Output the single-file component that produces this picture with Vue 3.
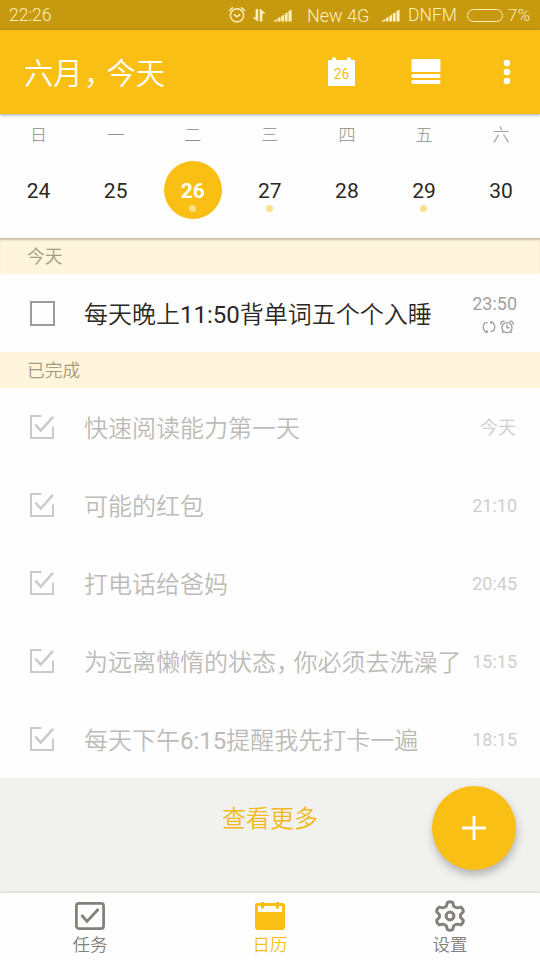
<script setup>
const days = [
  { week: '日', date: 24 },
  { week: '一', date: 25 },
  { week: '二', date: 26, active: true, dot: true },
  { week: '三', date: 27, dot: true },
  { week: '四', date: 28 },
  { week: '五', date: 29, dot: true },
  { week: '六', date: 30 },
]

const completed = [
  { title: '快速阅读能力第一天', time: '今天', word: true },
  { title: '可能的红包', time: '21:10' },
  { title: '打电话给爸妈', time: '20:45' },
  { title: '为远离懒惰的状态，你必须去洗澡了', time: '15:15' },
  { title: '每天下午6:15提醒我先打卡一遍', time: '18:15' },
]

// Splits a title so that clock times and commas can be styled on their own.
const split = (title) =>
  title
    .split(/([\d:]+|，)/)
    .filter(Boolean)
    .map((text) => ({
      text,
      kind: text === '，' ? 'comma' : /^\d/.test(text) ? 'digits' : '',
    }))
</script>

<template>
  <div class="screen">
    <div class="status">
      <span class="clock">22:26</span>
      <svg class="s-alarm" width="18" height="18" viewBox="0 0 18 18" fill="none" stroke="currentColor" stroke-width="1.4" stroke-linecap="round">
        <circle cx="9" cy="9.4" r="6.6" />
        <path d="M6.4 8.600 9 10.800l2.800-2.200M1.300 4.600 4.600 1.700M16.700 4.600l-3.300-2.900" />
      </svg>
      <svg class="s-data" width="14" height="14" viewBox="0 0 14 14" fill="currentColor">
        <path d="M3.600 1h2.600v12.500L.3 9.500h3.300zM7.800 13.500h2.600V5.500h3.300L7.800.5z" />
      </svg>
      <svg class="s-sig" width="20" height="13" viewBox="0 0 20 13" fill="currentColor">
        <path d="M0 12.500 4 10v2.500zM4.700 9.300 7.500 7.800v4.700H4.700zM8.300 7.300 11 5.500v7H8.300zM11.800 4.800l2.800-1.600v9.300h-2.800zM15.500 2.300 18.600.5v12h-3.100z" />
      </svg>
      <span class="net">New 4G</span>
      <svg class="s-sig2" width="20" height="13" viewBox="0 0 20 13" fill="currentColor">
        <path d="M0 12.500 4 10v2.500zM4.700 9.300 7.500 7.800v4.700H4.700zM8.300 7.300 11 5.500v7H8.300zM11.800 4.800l2.800-1.600v9.300h-2.800zM15.500 2.300 18.600.5v12h-3.100z" />
      </svg>
      <span class="carrier">DNFM</span>
      <span class="battery"></span>
      <span class="percent">7%</span>
    </div>

    <header class="header">
      <h1>六月<span class="comma">，</span>今天</h1>
      <div class="cal-icon"><span>26</span></div>
      <svg class="view-icon" width="30" height="26" viewBox="0 0 30 26" fill="#fff">
        <rect x=".5" y="0" width="29" height="13" rx="1.500" />
        <rect x=".5" y="15" width="29" height="4" rx="1.500" />
        <rect x=".5" y="21" width="29" height="4" rx="1.500" />
      </svg>
      <svg class="more-icon" width="8" height="26" viewBox="0 0 8 26" fill="#fff">
        <circle cx="4" cy="4" r="3.300" />
        <circle cx="4" cy="13" r="3.300" />
        <circle cx="4" cy="22" r="3.300" />
      </svg>
    </header>

    <section class="week">
      <div v-for="d in days" :key="d.date" class="day">
        <span class="week-name">{{ d.week }}</span>
        <span class="date" :class="{ active: d.active }">
          {{ d.date }}
          <i v-if="d.dot" class="dot"></i>
        </span>
      </div>
    </section>

    <div class="band first">今天</div>
    <div class="row pending">
      <span class="box"></span>
      <span class="title"><span v-for="(p, i) in split('每天晚上11:50背单词五个个入睡')" :key="i" :class="p.kind">{{ p.text }}</span></span>
      <div class="meta">
        <span class="time">23:50</span>
        <div class="meta-icons">
          <svg width="14" height="14" viewBox="0 0 14 14" fill="none" stroke="currentColor" stroke-width="1.300">
            <path d="M5.600 12.600A5.700 5.700 0 0 1 3.400 2.600M8.400 1.400A5.700 5.700 0 0 1 10.600 11.400M3.400 2.600h2.200M8.400 1.400 9.600 3.900M5.600 12.600 4.400 10.100M10.600 11.400H8.400" />
          </svg>
          <svg width="14" height="14" viewBox="0 0 14 14" fill="none" stroke="currentColor" stroke-width="1.400">
            <circle cx="7" cy="7.600" r="5" />
            <path d="M7 4.500v3.300h2.600M.9 4.700C.2 2.500 2.400.6 4.500 1.500M13.100 4.700c.7-2.200-1.500-4.100-3.600-3.200M3.400 11.400l-1.200 1.700M10.600 11.400l1.200 1.700" />
          </svg>
        </div>
      </div>
    </div>

    <div class="band">已完成</div>
    <div v-for="t in completed" :key="t.time" class="row done">
      <svg class="check" width="26" height="26" viewBox="0 0 26 26" fill="none" stroke="currentColor">
        <path stroke-width="2" d="M12.500 2H2v22h22V12.500" />
        <path stroke-width="2.600" d="m6.300 10.500 5.400 6L24 2.800" />
      </svg>
      <span class="title"><span v-for="(p, i) in split(t.title)" :key="i" :class="p.kind">{{ p.text }}</span></span>
      <span class="time" :class="{ word: t.word }">{{ t.time }}</span>
    </div>

    <div class="footer">
      <span class="more">查看更多</span>
      <button class="fab" aria-label="+">
        <svg width="26" height="26" viewBox="0 0 26 26" stroke="#fff" stroke-width="2.800"><path d="M13 1v24M1 13h24" /></svg>
      </button>
    </div>

    <nav class="tabs">
      <div class="tab">
        <svg width="32" height="32" viewBox="0 0 32 32" fill="none" stroke="currentColor" stroke-width="2.800">
          <rect x="2.400" y="3.400" width="27.200" height="25.200" rx="2.500" />
          <path d="m7.500 15 5.500 6.500L24.500 9" />
        </svg>
        <span>任务</span>
      </div>
      <div class="tab on">
        <svg width="32" height="32" viewBox="0 0 32 32">
          <path fill="currentColor" fill-rule="evenodd" d="M3 3h4V2h3v1h12V2h3v1h4a2 2 0 0 1 2 2v22a3 3 0 0 1-3 3H4a3 3 0 0 1-3-3V5a2 2 0 0 1 2-2zM4 6v6h24V6h-3v2.500h-3V6H10v2.500H7V6z" />
        </svg>
        <span>日历</span>
      </div>
      <div class="tab">
        <svg width="32" height="32" viewBox="0 0 32 32" fill="none" stroke="currentColor" stroke-width="3" stroke-linejoin="round">
          <path d="M13.300 2.500Q16 .8 18.700 2.500L19.600 6.100Q21.200 7.500 23.100 7.900L26.700 7.100Q29.400 8.800 29.300 11.800L26.700 14.500Q26.200 16 26.700 17.500L29.300 20.200Q29.400 23.200 26.700 24.900L23.100 24.100Q21.200 24.500 19.600 25.900L18.700 29.500Q16 31.200 13.300 29.500L12.400 25.900Q10.800 24.500 8.900 24.100L5.300 24.900Q2.600 23.200 2.700 20.200L5.300 17.500Q5.800 16 5.300 14.500L2.700 11.800Q2.600 8.800 5.300 7.100L8.900 7.900Q10.800 7.500 12.400 6.100Z" />
          <circle cx="16" cy="16" r="3.900" />
        </svg>
        <span>设置</span>
      </div>
    </nav>
  </div>
</template>

<style>
body {
  margin: 0;
}
</style>

<style scoped>
.screen {
  width: 540px;
  height: 960px;
  overflow: hidden;
  display: flex;
  flex-direction: column;
  background: #fefefe;
  font-family: Roboto, "Noto Sans CJK SC", sans-serif;
  font-weight: 350;
  color: #2c2824;
}
.status {
  height: 30px;
  flex: none;
  box-sizing: border-box;
  display: flex;
  align-items: center;
  padding-left: 9px;
  background: #c6990f;
  color: #fff0bd;
  font-size: 17.500px;
  white-space: nowrap;
}
.clock { width: 219px; flex: none; }
.s-alarm { flex: none; }
.s-data { flex: none; margin-left: 6px; }
.s-sig { flex: none; margin-left: 7px; }
.net { margin-left: 14px; width: 66px; flex: none; font-size: 18px; }
.s-sig2 { flex: none; margin-left: 8px; }
.carrier { margin-left: 7px; width: 51px; flex: none; }
.battery {
  flex: none;
  box-sizing: border-box;
  width: 36px;
  height: 13px;
  margin-left: 8px;
  border: 1px solid currentColor;
  border-radius: 7px;
}
.percent { margin-left: 5px; font-size: 17px; }

.header {
  position: relative;
  z-index: 1;
  height: 84px;
  flex: none;
  display: flex;
  align-items: center;
  padding-left: 24px;
  background: #f9bf15;
  box-shadow: 0 1px 3px rgba(60, 70, 80, 0.5);
}
h1 {
  width: 304px;
  flex: none;
  margin: 4px 0 0;
  font-size: 29.300px;
  font-weight: 350;
  color: #fff;
  line-height: 40px;
}
h1 .comma { margin-left: 1.500px; letter-spacing: -7px; }
.title .comma { letter-spacing: -6.500px; }
.title .digits { font-weight: 400; }
.cal-icon {
  position: relative;
  width: 27px;
  height: 26px;
  margin-top: 1px;
  flex: none;
  display: flex;
  align-items: center;
  justify-content: center;
  background: #fff;
  border-radius: 1px;
  color: #f9bf15;
  font-size: 14px;
  font-weight: 400;
}
.cal-icon span { padding-top: 2px; }
.cal-icon::before,
.cal-icon::after {
  content: "";
  position: absolute;
  top: -3px;
  width: 4px;
  height: 5px;
  border-radius: 2px 2px 0 0;
  background: #fff;
}
.cal-icon::before { left: 4px; }
.cal-icon::after { right: 4px; }
.view-icon { margin-left: 56px; flex: none; }
.more-icon { margin-left: 62px; flex: none; }

.week {
  height: 124px;
  flex: none;
  display: grid;
  grid-template-columns: repeat(7, 77.100px);
  box-sizing: border-box;
}
.day {
  display: flex;
  flex-direction: column;
  align-items: center;
}
.week-name {
  margin-top: 9px;
  height: 24px;
  line-height: 24px;
  font-size: 17px;
  font-weight: 300;
  color: #8f8c89;
}
.date {
  position: relative;
  width: 58px;
  height: 58px;
  margin-top: 14px;
  line-height: 60px;
  border-radius: 50%;
  text-align: center;
  font-size: 21px;
  font-weight: 400;
}
.date.active {
  background: #f9bf15;
  color: #fff;
  font-weight: 700;
}
.dot {
  position: absolute;
  left: 25px;
  top: 44px;
  width: 7px;
  height: 7px;
  border-radius: 50%;
  background: #fbe08b;
}
.band {
  height: 36px;
  flex: none;
  box-sizing: border-box;
  padding-left: 27px;
  background: #fff4dc;
  color: #a69b80;
  font-size: 17.800px;
  line-height: 38px;
}
.band.first { box-shadow: inset 0 3px 2px -1px rgba(80, 60, 60, 0.3); }

.row {
  height: 78px;
  flex: none;
  box-sizing: border-box;
  display: flex;
  align-items: center;
  padding: 0 23px 0 29px;
  white-space: nowrap;
}
.box {
  width: 25px;
  height: 25px;
  margin-left: 1px;
  flex: none;
  box-sizing: border-box;
  border: 2px solid #9c9b9a;
}
.row .title {
  flex: 1;
  font-size: 24px;
  line-height: 36px;
}
.pending .title { margin: 4px 0 0 29px; }
.done .title {
  margin: 4px 0 0 29px;
  color: #bdbbb8;
}
.check { flex: none; color: #cbcbcb; }
.done .time {
  flex: none;
  margin-top: 2px;
  font-size: 18px;
  font-weight: 400;
  line-height: 24px;
  color: #d0cecc;
}
.done .time.word {
  margin-right: 1px;
  font-weight: 350;
}
.meta {
  display: flex;
  flex-direction: column;
  align-items: flex-end;
  color: #a3a19f;
}
.meta .time {
  font-size: 18px;
  font-weight: 400;
  line-height: 22px;
}
.meta-icons {
  display: flex;
  gap: 4px;
  margin: 5px 3px 0 0;
}
.meta-icons svg { display: block; }

.footer {
  position: relative;
  height: 115px;
  flex: none;
  display: flex;
  justify-content: center;
  background: #f1f1ef;
}
.more {
  margin-top: 23px;
  font-size: 24px;
  line-height: 36px;
  height: 36px;
  color: #f3b91d;
}
.fab {
  position: absolute;
  right: 24px;
  top: 8px;
  width: 84px;
  height: 84px;
  padding: 0;
  border: 0;
  border-radius: 50%;
  display: flex;
  align-items: center;
  justify-content: center;
  background: #f9bf15;
  box-shadow: 1px 5px 9px rgba(0, 0, 0, 0.26);
}
.tabs {
  position: relative;
  height: 67px;
  flex: none;
  display: grid;
  grid-template-columns: repeat(3, 1fr);
  background: #fefefe;
  box-shadow: 0 -1px 2px rgba(0, 0, 0, 0.12);
}
.tab {
  display: flex;
  flex-direction: column;
  align-items: center;
  padding-top: 7px;
  color: #85807a;
}
.tab svg { display: block; }
.tab span {
  font-size: 17.500px;
  line-height: 26px;
}
.tab.on { color: #f9bf15; }
</style>
